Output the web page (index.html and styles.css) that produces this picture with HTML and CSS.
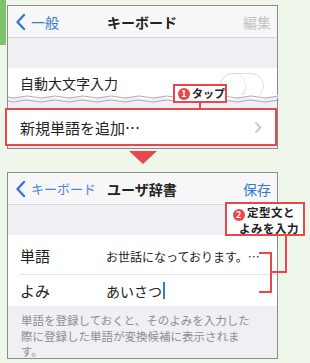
FILE: index.html
```html
<!DOCTYPE html>
<html>
<head>
  <title>ユーザ辞書</title>
  <link rel="stylesheet" href="styles.css">
</head>
<body>
  <div class="page">
    <div class="side-tab"></div>

    <div class="screen screen-top">
      <div class="navbar">
        <div class="nav-back">
          <svg class="chevron" width="11" height="18" viewBox="0 0 11 18"><path d="M9 2 L2.5 9 L9 16" /></svg>
          <span>一般</span>
        </div>
        <div class="nav-title">キーボード</div>
        <div class="nav-action disabled">編集</div>
      </div>
      <div class="gap-band"></div>
      <div class="row row-cut">
        <span class="row-label">自動大文字入力</span>
        <div class="toggle"><div class="knob"></div></div>
      </div>
      <svg class="wave" width="271" height="9" viewBox="0 0 271 9" preserveAspectRatio="none">
        <path class="wave-fill" d="M0 0 H271 V3 Q264 0 257 3 T243 3 T229 3 T215 3 T201 3 T187 3 T173 3 T159 3 T145 3 T131 3 T117 3 T103 3 T89 3 T75 3 T61 3 T47 3 T33 3 T19 3 T5 3 L0 2 Z" />
        <path class="wave-line" d="M0 2 Q5 4 12 2 T26 2 T40 2 T54 2 T68 2 T82 2 T96 2 T110 2 T124 2 T138 2 T152 2 T166 2 T180 2 T194 2 T208 2 T222 2 T236 2 T250 2 T264 2 T278 2" />
        <path class="wave-line" d="M0 6 Q5 8 12 6 T26 6 T40 6 T54 6 T68 6 T82 6 T96 6 T110 6 T124 6 T138 6 T152 6 T166 6 T180 6 T194 6 T208 6 T222 6 T236 6 T250 6 T264 6 T278 6" />
      </svg>
      <div class="row row-add">
        <span class="row-label">新規単語を追加…</span>
        <svg class="disclosure" width="8" height="13" viewBox="0 0 8 13"><path d="M1.5 1.5 L6.5 6.5 L1.5 11.5" /></svg>
      </div>
      <div class="bottom-band"></div>
    </div>

    <div class="arrow-down"></div>

    <div class="screen screen-bottom">
      <div class="navbar">
        <div class="nav-back">
          <svg class="chevron" width="11" height="18" viewBox="0 0 11 18"><path d="M9 2 L2.5 9 L9 16" /></svg>
          <span class="small">キーボード</span>
        </div>
        <div class="nav-title">ユーザ辞書</div>
        <div class="nav-action">保存</div>
      </div>
      <div class="gap-band"></div>
      <div class="form">
        <div class="form-row first">
          <span class="form-label">単語</span>
          <span class="form-value phrase">お世話になっております。…</span>
        </div>
        <div class="form-row second">
          <span class="form-label">よみ</span>
          <span class="form-value">あいさつ<span class="caret"></span></span>
        </div>
      </div>
      <div class="footnote">単語を登録しておくと、そのよみを入力した際に登録した単語が変換候補に表示されます。</div>
    </div>

    <div class="callout callout-tap">
      <span class="num">1</span><span>タップ</span>
    </div>
    <div class="tap-line"></div>

    <div class="callout callout-input">
      <div><span class="num">2</span>定型文と</div>
      <div class="second-line">よみを入力</div>
    </div>
    <svg class="bracket" width="40" height="90" viewBox="0 0 40 90">
      <path d="M30 0 V37 H15" />
      <path d="M3 18 H15 V57 H3" />
    </svg>
  </div>
</body>
</html>
```

FILE: styles.css
```css
:root {
  --page: #eff6ea;
  --green: #7cc36a;
  --frame: #8c8c8c;
  --nav: #f7f7f7;
  --band: #efeff4;
  --hairline: #d6d6da;
  --blue: #3479cf;
  --red: #e8474b;
  --text: #222;
  --muted: #8e8e93;
}

body {
  margin: 0;
  width: 310px;
  height: 363px;
  overflow: hidden;
  background: var(--page);
  font-family: "Noto Sans CJK JP", "Noto Sans", sans-serif;
  color: var(--text);
}

.page {
  position: relative;
  padding: 5px 0 0 7px;
}

.side-tab {
  position: absolute;
  left: 0;
  top: 0;
  width: 6px;
  height: 45px;
  background: var(--green);
}

.screen {
  width: 271px;
  border: 1px solid var(--frame);
  box-sizing: border-box;
  background: var(--band);
}

.navbar {
  display: flex;
  align-items: center;
  height: 32px;
  padding: 0 6px 0 7px;
  background: var(--nav);
  border-bottom: 1px solid var(--hairline);
  box-sizing: border-box;
}

.nav-back {
  display: flex;
  align-items: center;
  gap: 5px;
  width: 92px;
  color: var(--blue);
  font-size: 14px;
}

.nav-back .small {
  font-size: 13px;
  color: #4a88d6;
}

.chevron path {
  fill: none;
  stroke: var(--blue);
  stroke-width: 2.4;
  stroke-linecap: round;
  stroke-linejoin: round;
}

.nav-title {
  flex: 1;
  font-size: 14px;
  font-weight: 700;
}

.nav-action {
  font-size: 14px;
  color: var(--blue);
}

.nav-action.disabled {
  color: #c4c4c8;
}

.gap-band {
  height: 30px;
  background: var(--band);
}

.row {
  display: flex;
  align-items: center;
  justify-content: space-between;
  background: white;
  padding: 0 12px;
}

.row-label {
  font-size: 14px;
}

.row-cut {
  height: 27px;
  align-items: flex-start;
  padding-top: 5px;
  box-sizing: border-box;
  overflow: hidden;
}

.toggle {
  width: 44px;
  height: 26px;
  border: 1px solid #dedee2;
  border-radius: 14px;
  box-sizing: border-box;
  position: relative;
  right: 1px;
}

.knob {
  width: 24px;
  height: 24px;
  border-radius: 50%;
  background: white;
  box-shadow: 0 1px 3px rgba(0,0,0,0.25);
}

.wave {
  display: block;
  margin-bottom: 4px;
}

.wave-fill {
  fill: white;
}

.wave-line {
  fill: none;
  stroke: #9a9aa0;
  stroke-width: 0.8;
}

.row-add {
  height: 38px;
  margin-left: -3px;
  padding: 0 13px 0 13px;
  border: 2px solid var(--red);
  box-sizing: border-box;
}

.row-add .row-label {
  font-size: 15px;
}

.disclosure path {
  fill: none;
  stroke: #c7c7cc;
  stroke-width: 1.8;
}

.bottom-band {
  height: 2px;
}

.arrow-down {
  width: 0;
  height: 0;
  margin: 2px 0 8px 122px;
  border-left: 14px solid transparent;
  border-right: 14px solid transparent;
  border-top: 13px solid var(--red);
}

.screen-bottom {
  height: 187px;
}

.form {
  background: white;
}

.form-row {
  display: flex;
  align-items: center;
  padding-left: 12px;
}

.form-row.first {
  height: 40px;
  position: relative;
}

.form-row.first::after {
  content: "";
  position: absolute;
  left: 12px;
  right: 0;
  bottom: 0;
  border-bottom: 1px solid #e4e4e8;
}

.form-row.second {
  height: 31px;
}

.form-label {
  width: 86px;
  font-size: 15px;
}

.form-value {
  font-size: 14px;
  display: flex;
  align-items: center;
}

.form-value.phrase {
  font-size: 12px;
  margin-top: 3px;
}

.caret {
  display: inline-block;
  width: 2px;
  height: 17px;
  margin-left: 1px;
  background: var(--blue);
}

.footnote {
  padding: 7px 24px 0 13px;
  font-size: 11.5px;
  line-height: 15.5px;
  color: var(--muted);
}

/* Callouts */
.callout {
  position: absolute;
  background: white;
  border: 2px solid var(--red);
  font-size: 11.5px;
  font-weight: 700;
  box-sizing: border-box;
  white-space: nowrap;
}

.num {
  display: inline-flex;
  align-items: center;
  justify-content: center;
  width: 12px;
  height: 12px;
  margin-right: 2px;
  border-radius: 50%;
  background: var(--red);
  color: white;
  font-size: 9px;
  line-height: 1;
  vertical-align: -1px;
}

.callout-tap {
  left: 173px;
  top: 84px;
  width: 54px;
  height: 19px;
  display: flex;
  align-items: center;
  padding-left: 3px;
  font-size: 11px;
  line-height: 1;
}

.tap-line {
  position: absolute;
  left: 199px;
  top: 102px;
  width: 2px;
  height: 8px;
  background: var(--red);
}

.callout-input {
  left: 225px;
  top: 202px;
  width: 80px;
  height: 34px;
  padding: 1px 4px 0 6px;
  line-height: 14px;
  letter-spacing: 0.5px;
}

.callout-input .second-line {
  text-align: right;
}

.bracket {
  position: absolute;
  left: 256px;
  top: 235px;
}

.bracket path {
  fill: none;
  stroke: var(--red);
  stroke-width: 2;
}
```
